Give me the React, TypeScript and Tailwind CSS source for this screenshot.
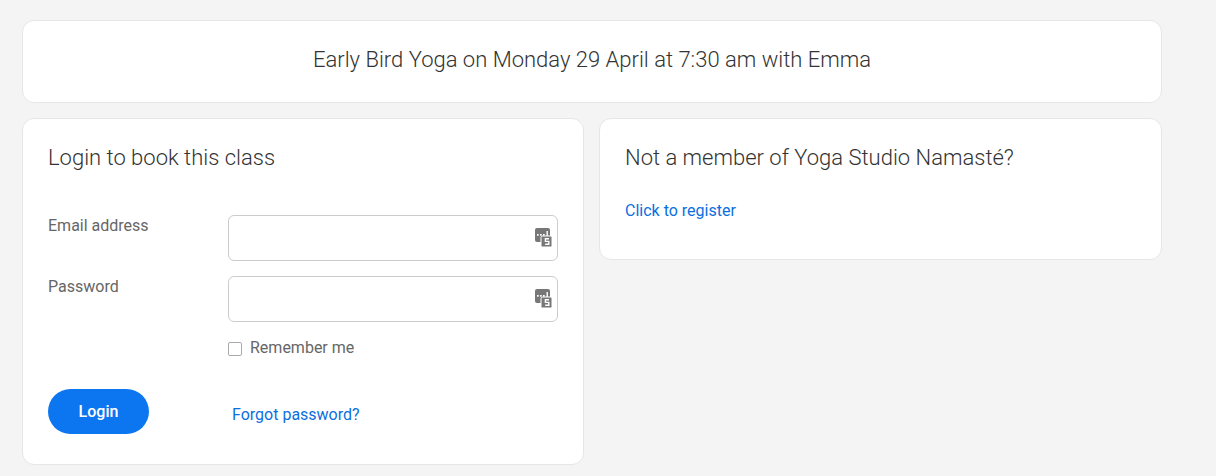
const fieldIcon = (
  <svg width="17" height="19" viewBox="0 0 17 19" className="absolute right-[5px] top-[12px]">
    <rect x="0" y="0" width="15" height="14" rx="2" fill="#777" />
    <rect x="2" y="6" width="1.7" height="1.7" fill="#fff" />
    <rect x="5" y="6" width="1.7" height="1.7" fill="#fff" />
    <rect x="8" y="6" width="1.7" height="1.7" fill="#fff" />
    <rect x="11.5" y="3" width="1.4" height="5" fill="#fff" />
    <rect x="6" y="8" width="11" height="11" rx="1.5" fill="#777" stroke="#fff" strokeWidth="1" />
    <path d="M14 10.8h-3.6v2.6h3.4v2.8h-3.6" fill="none" stroke="#fff" strokeWidth="1.4" />
  </svg>
);

function Field({ label }: { label: string }) {
  return (
    <div className="flex">
      <label className="w-[180px] text-[16px] leading-[20px] text-[#666]">{label}</label>
      <div className="relative -mt-[1px] h-[46px] flex-1 rounded-[6px] border border-[#ccc] bg-white">
        <input className="h-full w-full bg-transparent px-3 outline-none" />
        {fieldIcon}
      </div>
    </div>
  );
}

export default function App() {
  return (
    <div className="h-[476px] overflow-hidden bg-[#f4f4f4] pl-[22px] pt-[20px] font-['Roboto',sans-serif]">
      <div className="flex w-[1140px] flex-col gap-[15px]">
        <div className="flex h-[83px] items-center justify-center rounded-[12px] border border-[#e6e6e6] bg-white pb-[4px] text-[22px] font-light text-[#333]">
          Early Bird Yoga on Monday 29 April at 7:30 am with Emma
        </div>

        <div className="flex items-start gap-[15px]">
          <div className="h-[347px] w-[562px] rounded-[12px] border border-[#e6e6e6] bg-white pl-[25px] pr-[25px] pt-[25px]">
            <h2 className="text-[22px] leading-[28px] font-light text-[#333]">Login to book this class</h2>
            <div className="mt-[44px] flex flex-col gap-[16px]">
              <Field label="Email address" />
              <Field label="Password" />
            </div>
            <label className="mt-[16px] ml-[180px] flex items-center gap-[8px] text-[16px] leading-[20px] text-[#666]">
              <span className="mt-[1px] h-[14px] w-[14px] rounded-[2px] border border-[#aaa] bg-white" />
              Remember me
            </label>
            <div className="mt-[31px] flex items-center">
              <button className="h-[45px] w-[101px] rounded-[23px] bg-[#0b76f0] text-[16px] font-medium text-white">
                Login
              </button>
              <a className="ml-[83px] mt-[7px] text-[16px] text-[#0b6fe0]">Forgot password?</a>
            </div>
          </div>

          <div className="h-[142px] w-[563px] rounded-[12px] border border-[#e6e6e6] bg-white pl-[25px] pt-[25px]">
            <h2 className="text-[22px] leading-[28px] font-light text-[#333]">Not a member of Yoga Studio Namasté?</h2>
            <a className="mt-[29px] block text-[16px] leading-[20px] text-[#0b6fe0]">Click to register</a>
          </div>
        </div>
      </div>
    </div>
  );
}
